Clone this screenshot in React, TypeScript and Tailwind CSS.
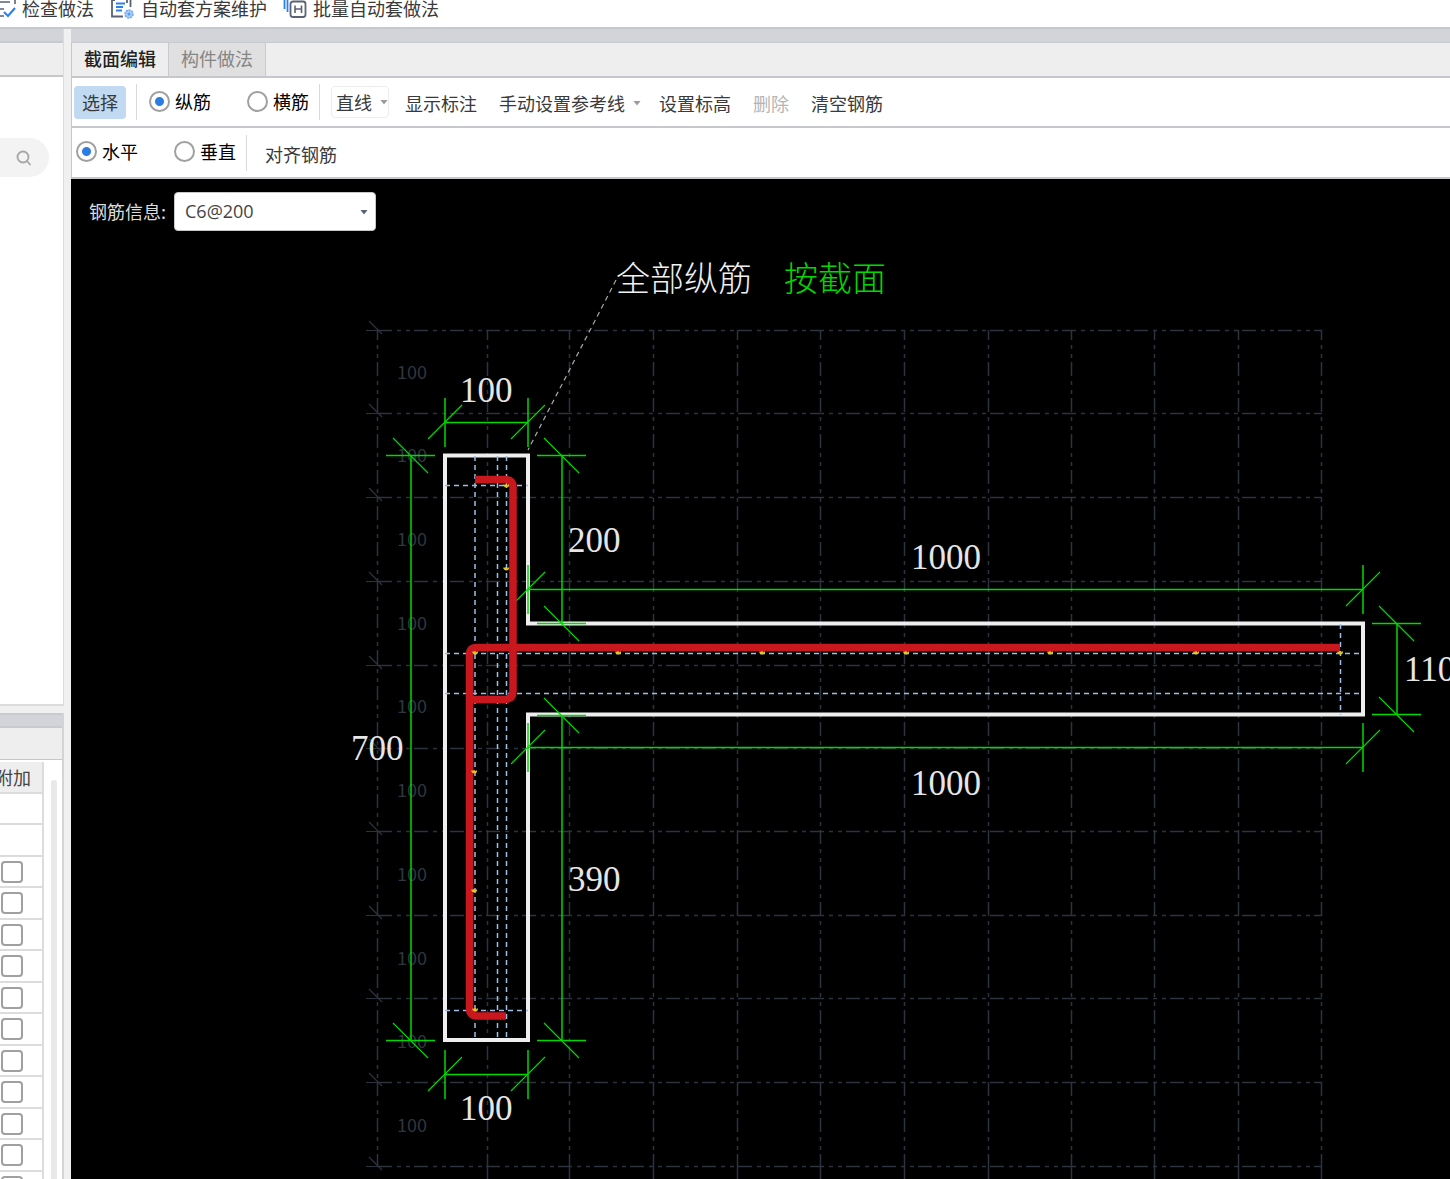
import { useState, ReactNode } from "react";

const columns = [377, 487, 569, 653, 737, 820, 904, 988, 1071, 1154, 1238, 1321];
const gridRows = [330, 413, 497, 581, 665, 748, 831, 915, 998, 1082, 1166];
const gridLabels = [379, 462, 546, 630, 713, 797, 881, 965, 1048, 1132];

// Batas dan garis miring tiap dimensi
const hDims = [
  { x1: 445, x2: 528, y: 422, label: "100", tx: 460, ty: 402 },
  { x1: 528, x2: 1363, y: 589, label: "1000", tx: 911, ty: 569 },
  { x1: 528, x2: 1363, y: 747, label: "1000", tx: 911, ty: 795 },
  { x1: 445, x2: 528, y: 1074, label: "100", tx: 460, ty: 1120 },
];

const vDims = [
  { x: 411, y1: 455, y2: 1040, label: "700", tx: 351, ty: 760 },
  { x: 562, y1: 455, y2: 623, label: "200", tx: 568, ty: 552 },
  { x: 562, y1: 715, y2: 1040, label: "390", tx: 568, ty: 891 },
  { x: 1397, y1: 623, y2: 714, label: "110", tx: 1404, ty: 681 },
];

const bars = [
  [506, 485], [506, 568], [475, 652], [618, 652], [762, 652], [906, 652],
  [1050, 652], [1196, 652], [1340, 652], [474, 771], [474, 890], [475, 1009],
];

function Caret({ className }: { className: string }) {
  return (
    <svg className={className} width="8" height="5" viewBox="0 0 8 5" aria-hidden="true">
      <path d="M0.5 0h7L4 4.5z" fill="currentColor" />
    </svg>
  );
}

function Separator() {
  return <span className="h-9 w-px shrink-0 bg-[#d9d9d9]" />;
}

interface RadioProps {
  name: string;
  label: string;
  checked: boolean;
  onChange: () => void;
}

function Radio({ name, label, checked, onChange }: RadioProps) {
  return (
    <label className="flex items-center gap-[5px] pb-0.5 text-black whitespace-nowrap">
      <input
        type="radio"
        name={name}
        checked={checked}
        onChange={onChange}
        className="size-[21px] shrink-0 appearance-none rounded-full border-2 border-[#a0a0a0] bg-white checked:bg-[radial-gradient(circle,#2b7de1_0_4px,#fff_5px)]"
      />
      {label}
    </label>
  );
}

function ToolButton({ children, disabled }: { children: ReactNode; disabled?: boolean }) {
  return (
    <button disabled={disabled} className="flex items-center pt-[3px] whitespace-nowrap disabled:text-[#b5b5b5]">
      {children}
    </button>
  );
}

function TopBar() {
  return (
    <header className="flex h-[27px] shrink-0 items-start overflow-hidden bg-white leading-4">
      <button className="flex gap-1.5 whitespace-nowrap">
        <svg width="16" height="18" viewBox="0 0 16 18" fill="none" aria-hidden="true">
          <path d="M0 2h10M0 9h4M0 16h4M15 0v4" stroke="#5a6275" strokeWidth="1.6" />
          <path d="M4 12l4 4 7-8" stroke="#2f80ed" strokeWidth="2.2" />
        </svg>
        检查做法
      </button>
      <button className="ml-4 flex gap-1.5 whitespace-nowrap">
        <svg width="25" height="19" viewBox="0 0 25 19" fill="none" aria-hidden="true">
          <path d="M5 0H2v16.500h11M20.500 0v7M17 0v3" stroke="#5a6275" strokeWidth="1.8" />
          <path d="M6 3.500h9M6 7h7M6 10.500h6" stroke="#2f80ed" strokeWidth="1.8" />
          <circle cx="19" cy="14" r="4" fill="#a9ccf7" stroke="#6ba8f2" strokeWidth="1.500" strokeDasharray="2 1" />
          <circle cx="19" cy="14" r="1.500" fill="#5a9cf0" />
        </svg>
        自动套方案维护
      </button>
      <button className="ml-4 flex gap-1.5 whitespace-nowrap">
        <svg width="24" height="19" viewBox="0 0 24 19" fill="none" aria-hidden="true">
          <path d="M1.500 0v9M4.500 0v12" stroke="#2f80ed" strokeWidth="1.8" />
          <rect x="7.500" y="1.500" width="15" height="15.500" rx="2.500" stroke="#5a6275" strokeWidth="1.8" />
          <path d="M12 5.500v7.500M18.500 5.500v7.500M12 9h6.500" stroke="#5a6275" strokeWidth="1.6" />
        </svg>
        批量自动套做法
      </button>
    </header>
  );
}

function SidePanel() {
  return (
    <aside className="flex w-16 shrink-0 flex-col overflow-hidden">
      <section className="flex h-[677px] shrink-0 flex-col border-r border-b-2 border-[#dcdcdc] bg-white">
        <div className="h-[14px] border-b-2 border-[#c8cbce] bg-[#d3d4da]" />
        <div className="h-[34px] border-b-2 border-[#c5c8cb] bg-[#eeeeee]" />
        <label className="mt-[61px] flex h-[39px] w-[49px] items-center rounded-r-full bg-[#f3f3f3]">
          <input type="text" aria-label="搜索" className="w-4 bg-transparent outline-none" />
          <svg width="15" height="16" viewBox="0 0 15 16" fill="none" stroke="#a6a6a6" strokeWidth="1.8" aria-hidden="true">
            <circle cx="7" cy="7" r="5.5" />
            <path d="M11 11l3.500 4" />
          </svg>
        </label>
      </section>
      <section className="mt-[7px] flex min-h-0 flex-1 flex-col border-r-2 border-[#d3d4d8] bg-white">
        <div className="h-[15px] shrink-0 border-y-2 border-y-[#c8cad0] bg-[#d3d4da]" />
        <div className="h-8 shrink-0 border-b border-b-[#c5c8cb] bg-[#eeeeee]" />
        <div className="flex min-h-0 flex-1 pt-0.5">
          <div className="w-11 shrink-0 overflow-hidden">
            <table className="w-full border-separate border-spacing-0">
              <thead>
                <tr>
                  <th className="h-8 border-r-2 border-b-2 border-[#dcdcdc] bg-[#eeeeee] p-0 font-normal text-[#444444]">
                    <div className="flex w-[31px] justify-end overflow-hidden whitespace-nowrap">
                      <span className="shrink-0">附加</span>
                    </div>
                  </th>
                </tr>
              </thead>
              <tbody>
                {Array.from({ length: 13 }, (_, i) => (
                  <tr key={i} className="odd:h-[31px] even:h-8">
                    <td className="border-r-2 border-b-2 border-[#dcdcdc] p-0">
                      {i > 1 && (
                        <input
                          type="checkbox"
                          aria-label={`附加 ${i + 1}`}
                          className="ml-px block size-[22px] appearance-none rounded-sm border-2 border-[#a0a0a0] bg-white checked:bg-[#2b7de1]"
                        />
                      )}
                    </td>
                  </tr>
                ))}
              </tbody>
            </table>
          </div>
          <div className="mt-[18px] ml-[7px] w-1.5 rounded-t-full bg-[#e9e9e9]" />
        </div>
      </section>
    </aside>
  );
}

function SectionDrawing() {
  return (
    <svg className="absolute inset-0 h-full w-full" role="img" aria-label="截面">
      <g transform="translate(-71 -179)" fill="none">
        <g stroke="#2c333e" strokeWidth="1.500">
          {gridRows.map((y) => (
            <g key={y}>
              <path d={`M378 ${y + 0.5}H1322`} strokeDasharray="14 5 4 5 4 4" />
              <path d={`M366 ${y + 0.5}h12M369 ${y - 9}l13 13`} strokeWidth="1.2" />
            </g>
          ))}
          {columns.map((x) => (
            <g key={x}>
              <path d={`M${x + 0.5} 330V1166`} strokeDasharray="14 5 4 5 4 4" strokeDashoffset="4" />
              {x > 377 && <path d={`M${x + 0.5} 1166v14`} />}
            </g>
          ))}
        </g>
        <g fill="#30363f" className="font-['Noto_Sans_CJK_SC',sans-serif] text-[18px]">
          {gridLabels.map((y) => (
            <text key={y} x="397" y={y}>100</text>
          ))}
        </g>

        <path d="M616 280L528 450" stroke="#a8a8a8" strokeWidth="1.2" strokeDasharray="5 4" />

        <path d="M445 455.500H528V623.500H1363V714.500H528V1040H445Z" stroke="#eeeeee" strokeWidth="4" />

        <g stroke="#9dbfe6" strokeWidth="1.500" strokeDasharray="5 4">
          <path d="M475 456V1040M497.500 456V1040M506.500 456V1040" />
          <path d="M445 485.500H528M445 1010.500H528M445 653.500H1363M445 693.500H1363M1340.500 624V715" />
        </g>

        <g stroke="#00d800" strokeWidth="1.500">
          {hDims.map((d) => (
            <g key={d.y}>
              <path d={`M${d.x1} ${d.y + 0.5}H${d.x2}`} />
              <path d={`M${d.x1} ${d.y - 24}v49M${d.x2} ${d.y - 24}v49`} />
              <path d={`M${d.x1 - 17} ${d.y + 17}l34 -34M${d.x2 - 17} ${d.y + 17}l34 -34`} strokeWidth="1.2" />
            </g>
          ))}
          {vDims.map((d) => (
            <g key={d.label}>
              <path d={`M${d.x} ${d.y1}V${d.y2}`} />
              <path d={`M${d.x - 25} ${d.y1 + 0.5}h49M${d.x - 25} ${d.y2 + 0.5}h49`} />
              <path d={`M${d.x - 18} ${d.y1 - 17}l35 35M${d.x - 18} ${d.y2 - 17}l35 35`} strokeWidth="1.2" />
            </g>
          ))}
        </g>

        <g stroke="#c9171e" strokeWidth="7.500">
          <path d="M475 479.500H505Q513 479.500 513 487V691Q513 699.500 504 699.500H470" />
          <path d="M506 1016H476Q469.500 1015 469.500 1009V655Q469.500 647.500 477 647.500H1340" />
        </g>

        <g stroke="#e8c81e" strokeWidth="1.500">
          {bars.map(([x, y]) => (
            <path key={`${x}-${y}`} d={`M${x - 2} ${y - 0.5}a2.200 2.200 0 1 0 4.400 0M${x - 1} ${y}h2`} />
          ))}
        </g>

        <g fill="#e6e6e6" className="font-['Liberation_Serif',serif] text-[35px]">
          {[...hDims, ...vDims].map((d) => (
            <text key={`${d.tx}-${d.ty}`} x={d.tx} y={d.ty}>{d.label}</text>
          ))}
        </g>
        <g className="font-['Noto_Sans_CJK_SC',sans-serif] text-[34px] font-light">
          <text x="616" y="291" fill="#f0f0f0">全部纵筋</text>
          <text x="784" y="291" fill="#00d800">按截面</text>
        </g>
      </g>
    </svg>
  );
}

export default function App() {
  const [barType, setBarType] = useState("纵筋");
  const [direction, setDirection] = useState("水平");

  return (
    <div className="flex h-screen flex-col overflow-hidden bg-[#f0f0f0] font-['Noto_Sans_CJK_SC',sans-serif] text-[18px] text-[#3a3a3a]">
      <TopBar />
      <div className="flex min-h-0 flex-1 border-t-2 border-[#c5c8cc]">
        <SidePanel />
        <main className="ml-[7px] flex min-w-0 flex-1 flex-col">
          <div className="h-[14px] shrink-0 border-b border-[#c8cbce] bg-[#d3d4da]" />
          <nav className="flex h-[35px] shrink-0 items-stretch border-b-2 border-l border-[#c5c8cb] bg-[#eeeeee]">
            <button className="px-3 pb-0.5 font-medium text-[#222222]">截面编辑</button>
            <button className="border-x border-[#c8cbce] bg-[#e0e0e0] px-3 pb-0.5 text-[#858585]">构件做法</button>
          </nav>

          <div className="flex h-[50px] shrink-0 items-center border-b-2 border-l border-[#c5c8cb] bg-white pl-0.5">
            <button className="h-[33px] w-[52px] rounded bg-[#c2d9f2] whitespace-nowrap">选择</button>
            <div className="ml-2.5 flex items-center gap-3">
              <Separator />
              <Radio name="barType" label="纵筋" checked={barType === "纵筋"} onChange={() => setBarType("纵筋")} />
            </div>
            <div className="ml-9 flex items-center gap-2.5">
              <Radio name="barType" label="横筋" checked={barType === "横筋"} onChange={() => setBarType("横筋")} />
              <Separator />
            </div>
            <button className="ml-[11px] flex h-8 items-center gap-2 rounded border border-[#ececec] pl-1 whitespace-nowrap">
              直线
              <Caret className="text-[#9a9a9a]" />
            </button>
            <div className="ml-4 flex items-center gap-[22px]">
              <ToolButton>显示标注</ToolButton>
              <ToolButton>
                手动设置参考线
                <Caret className="-mr-1 ml-2 text-[#9a9a9a]" />
              </ToolButton>
              <ToolButton>设置标高</ToolButton>
              <ToolButton disabled>删除</ToolButton>
              <ToolButton>清空钢筋</ToolButton>
            </div>
          </div>

          <div className="flex h-[51px] shrink-0 items-center border-b-2 border-l border-[#c5c8cb] bg-white pl-1">
            <Radio name="direction" label="水平" checked={direction === "水平"} onChange={() => setDirection("水平")} />
            <div className="ml-9 flex items-center gap-2.5">
              <Radio name="direction" label="垂直" checked={direction === "垂直"} onChange={() => setDirection("垂直")} />
              <Separator />
            </div>
            <div className="ml-[18px] flex">
              <ToolButton>对齐钢筋</ToolButton>
            </div>
          </div>

          <div className="relative min-h-0 flex-1 overflow-hidden bg-black">
            <SectionDrawing />
            <div className="relative flex items-center gap-2 px-[18px] pt-[13px]">
              <label htmlFor="rebar" className="text-[#dcdcdc]">钢筋信息:</label>
              <div className="relative">
                <select
                  id="rebar"
                  defaultValue="C6@200"
                  className="h-[39px] w-[202px] appearance-none rounded border border-[#c8c8c8] bg-white px-2.5 font-['Open_Sans',sans-serif] text-[#444444]"
                >
                  <option>C6@200</option>
                  <option>C8@200</option>
                </select>
                <Caret className="pointer-events-none absolute top-[18px] right-2 text-[#5a6275]" />
              </div>
            </div>
          </div>
        </main>
      </div>
    </div>
  );
}
